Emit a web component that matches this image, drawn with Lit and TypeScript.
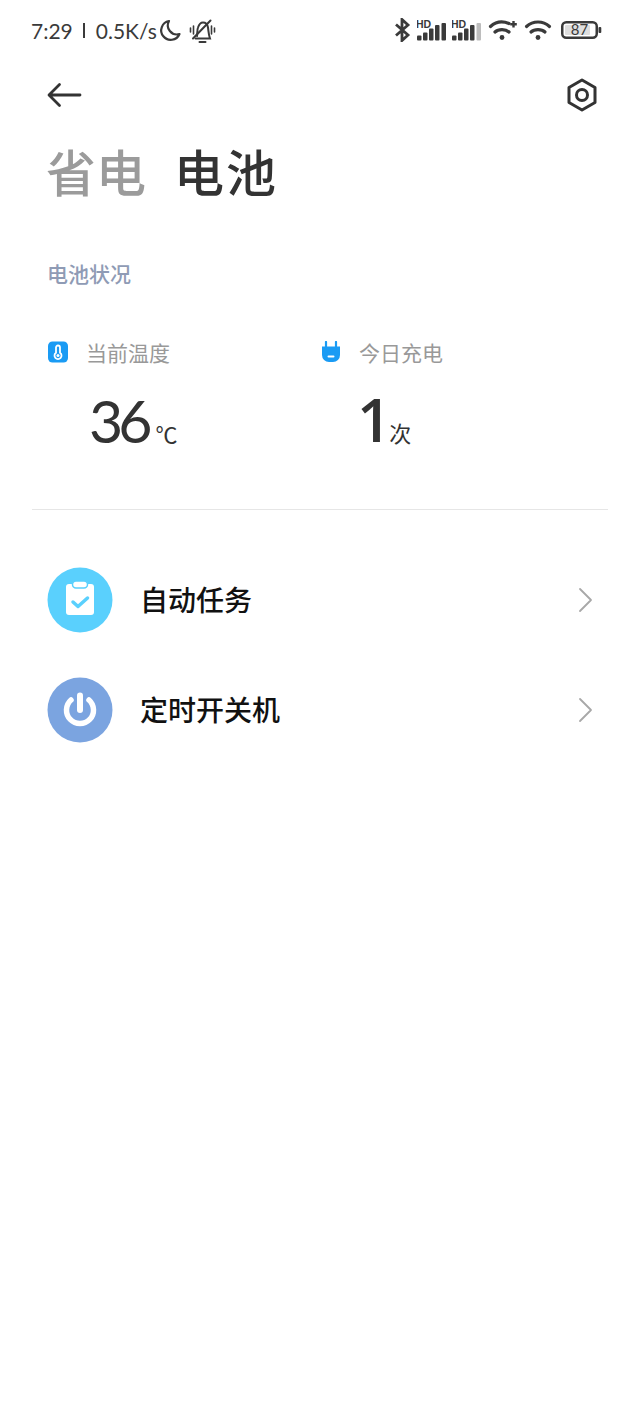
import { LitElement, html, css, svg } from "lit";
import { customElement } from "lit/decorators.js";

const signal = (last: string) => svg`
  <svg width="29" height="24" viewBox="0 0 29 24">
    <text x="-1" y="10" font-family="Liberation Sans" font-weight="700" font-size="10.500" fill="#3a3a3a">HD</text>
    <rect x="0" y="17.500" width="4.500" height="5" rx="1" fill="#3a3a3a" />
    <rect x="6" y="14.500" width="4.500" height="8" rx="1" fill="#3a3a3a" />
    <rect x="12" y="10.500" width="4.500" height="12" rx="1" fill="#3a3a3a" />
    <rect x="18" y="7" width="4.500" height="15.500" rx="1" fill="#3a3a3a" />
    <rect x="24.500" y="5" width="4.500" height="17.500" rx="1" fill="${last}" />
  </svg>`;

const wifi = (plus: boolean) => svg`
  <svg class=${plus ? "wifi-plus" : ""} width=${plus ? 30 : 28} height="22" viewBox="0 0 ${plus ? 30 : 28} 22" fill="none" stroke="#3a3a3a" stroke-width="3.200" stroke-linecap="round">
    <path d=${plus ? "M2.500 7.500C8 2.500 15 2 21 4.500" : "M2.500 7.500C9 1.500 19 1.500 25.500 7.500"} />
    <path d="M7 13C10.500 9.800 17.500 9.800 21 13" />
    <circle cx="14" cy="18.500" r="2.400" fill="#3a3a3a" stroke="none" />
    ${plus ? svg`<path d="M25.500 2V8.500M22.200 5.200H28.800" stroke-width="2.400" stroke-linecap="butt" />` : null}
  </svg>`;

const chevron = svg`
  <svg width="15" height="26" viewBox="0 0 15 26" fill="none" stroke="#a8a8a8" stroke-width="1.800" stroke-linecap="round" stroke-linejoin="round">
    <path d="M2 2L13 13L2 24" />
  </svg>`;

@customElement("app-root")
export class AppRoot extends LitElement {
  static styles = css`
    :host {
      display: block;
      min-height: 1422px;
      background: #fff;
      font-family: "Noto Sans CJK SC", sans-serif;
      color: #333;
    }
    .status {
      height: 60px;
      padding: 0 38px 0 31px;
      display: flex;
      align-items: center;
      justify-content: space-between;
      color: #3a3a3a;
      font-family: Lato, sans-serif;
      font-size: 21px;
      box-sizing: border-box;
    }
    .status-side {
      display: flex;
      align-items: center;
    }
    .status svg {
      display: block;
    }
    .sep {
      width: 2px;
      height: 15px;
      background: #3a3a3a;
      margin: 0 11px 0 10px;
    }
    .speed {
      margin-right: 1px;
    }
    .bell {
      margin-left: 7px;
    }
    .right {
      gap: 6px;
    }
    .wifi-plus {
      margin-left: 1px;
    }
    .battery {
      margin-left: 3px;
    }
    .bar {
      height: 70px;
      padding: 0 42px 0 47px;
      display: flex;
      align-items: center;
      justify-content: space-between;
    }
    .bar svg {
      display: block;
    }
    .tabs {
      margin-top: 5px;
      padding-left: 46px;
      display: flex;
      gap: 28px;
      font-size: 50px;
      line-height: 70px;
      font-weight: 500;
    }
    .tab-off {
      color: #9b9b9b;
    }
    .tab-on {
      letter-spacing: 2px;
    }
    .section {
      margin: 52px 0 0 47px;
      font-size: 21px;
      line-height: 32px;
      font-weight: 500;
      color: #8f9bb5;
    }
    .stats {
      margin-top: 47px;
      padding-left: 48px;
      display: grid;
      grid-template-columns: 273px 1fr;
    }
    .stat-head {
      display: flex;
      align-items: center;
      gap: 18px;
      height: 32px;
      font-size: 21px;
      color: #999;
    }
    .stat-head svg {
      display: block;
      flex: none;
    }
    .stat-value {
      margin: 17px 0 0 41px;
      display: flex;
      align-items: baseline;
      gap: 8px;
      font-family: Lato, sans-serif;
      font-size: 59px;
      letter-spacing: -5px;
      line-height: 72px;
      color: #333;
    }
    .stat-count {
      margin-left: 36px;
      gap: 0;
      font-family: "Open Sans", sans-serif;
      font-weight: 600;
      font-size: 60px;
      line-height: 68px;
      letter-spacing: -2px;
    }
    .stat-unit {
      font-size: 22px;
      font-weight: 400;
      letter-spacing: 0;
      font-family: "Noto Sans CJK SC", sans-serif;
    }
    .divider {
      margin: 40px 32px 0;
      height: 1px;
      background: #e6e6e6;
    }
    .list {
      margin-top: 35px;
    }
    .row {
      height: 110px;
      padding: 0 47px;
      display: flex;
      align-items: center;
      gap: 27px;
      font-size: 28px;
      font-weight: 500;
      color: #111;
    }
    .row svg {
      display: block;
      flex: none;
    }
    .row-label {
      flex: 1;
      padding-bottom: 2px;
    }
  `;

  render() {
    return html`
      <div class="status">
        <div class="status-side">
          <span>7:29</span>
          <span class="sep"></span>
          <span class="speed">0.5K/s</span>
          <svg width="24" height="24" viewBox="0 0 24 24" fill="none" stroke="#3a3a3a" stroke-width="2.200" stroke-linejoin="round">
            <path d="M11 3A9.500 9.500 0 1 0 21.500 16A9 9 0 0 1 11 3Z" />
          </svg>
          <svg class="bell" width="27" height="26" viewBox="0 0 27 26" fill="none" stroke="#3a3a3a" stroke-width="2" stroke-linecap="round">
            <path d="M8 19C8.500 16 8 13 9 10.500C10 7.500 11.500 5.500 14 5.500C16.500 5.500 18.500 7.500 19 10.500C19.500 14 19.500 17 21 21.500H6.500" />
            <path d="M10.500 25H16.500M4 21.500L21.500 3.500" />
            <path d="M1.500 11V15M4.500 9V17M22.500 9V17M25.500 11V15" stroke-width="1.600" />
          </svg>
        </div>
        <div class="status-side right">
          <svg width="17" height="24" viewBox="0 0 17 24" fill="none" stroke="#3a3a3a" stroke-width="2.800">
            <path d="M2 6.500L14 17L8 22.500V1.500L14 7L2 17.500" />
          </svg>
          ${signal("#3a3a3a")} ${signal("#bdbdbd")} ${wifi(true)} ${wifi(false)}
          <svg class="battery" width="41" height="20" viewBox="0 0 41 20">
            <rect x="1.250" y="2.250" width="34.500" height="15.500" rx="4" fill="none" stroke="#3a3a3a" stroke-width="2.500" />
            <rect x="4" y="5" width="25" height="10" rx="1" fill="#dedede" />
            <text x="18.500" y="15" text-anchor="middle" font-family="Lato" font-size="15" fill="#3a3a3a">87</text>
            <rect x="37.500" y="7" width="2.800" height="6" rx="1" fill="#3a3a3a" />
          </svg>
        </div>
      </div>

      <div class="bar">
        <svg width="36" height="26" viewBox="0 0 36 26" fill="none" stroke="#333" stroke-width="2.800" stroke-linecap="round" stroke-linejoin="round">
          <path d="M33 13H2.500M12.500 2.500L2 13L12.500 23.500" />
        </svg>
        <svg width="32" height="34" viewBox="0 0 32 34" fill="none" stroke="#333" stroke-width="3" stroke-linejoin="round">
          <path d="M16 2L29 9.500V24.500L16 32L3 24.500V9.500Z" />
          <circle cx="16" cy="17" r="5.500" />
        </svg>
      </div>

      <div class="tabs">
        <span class="tab-off">省电</span>
        <span class="tab-on">电池</span>
      </div>

      <div class="section">电池状况</div>

      <div class="stats">
        <div>
          <div class="stat-head">
            <svg width="20" height="22" viewBox="0 0 20 22">
              <rect width="20" height="21" y="0.500" rx="4.500" fill="#1a9bf4" />
              <path d="M10 4.500a2 2 0 0 1 2 2v5.200a3.500 3.500 0 1 1-4 0V6.500a2 2 0 0 1 2-2Z" fill="none" stroke="#fff" stroke-width="1.800" />
              <circle cx="10" cy="14.500" r="1.500" fill="#fff" />
            </svg>
            当前温度
          </div>
          <div class="stat-value">36<span class="stat-unit">℃</span></div>
        </div>
        <div>
          <div class="stat-head">
            <svg width="20" height="22" viewBox="0 0 20 22">
              <path d="M5 1V6M15 1V6" stroke="#1a9bf4" stroke-width="2.200" stroke-linecap="round" />
              <path d="M1 5.500H19V14A7 7 0 0 1 12 21H8A7 7 0 0 1 1 14Z" fill="#1a9bf4" />
              <rect x="6.500" y="14.500" width="7" height="2" rx="1" fill="#fff" />
            </svg>
            今日充电
          </div>
          <div class="stat-value stat-count">1<span class="stat-unit">次</span></div>
        </div>
      </div>

      <div class="divider"></div>

      <div class="list">
        <div class="row">
          <svg width="66" height="66" viewBox="0 0 66 66">
            <circle cx="33" cy="33" r="32.500" fill="#5ad0fd" />
            <path d="M19 20A3 3 0 0 1 22 17H44A3 3 0 0 1 47 20V45A3 3 0 0 1 44 48H22A3 3 0 0 1 19 45Z" fill="#fff" />
            <rect x="25.500" y="14" width="15" height="7" rx="3.500" fill="#fff" stroke="#5ad0fd" stroke-width="1.500" />
            <path d="M26 35L31 39.500L40.500 31" fill="none" stroke="#5ad0fd" stroke-width="3.500" stroke-linecap="round" stroke-linejoin="round" />
          </svg>
          <span class="row-label">自动任务</span>
          ${chevron}
        </div>
        <div class="row">
          <svg width="66" height="66" viewBox="0 0 66 66">
            <circle cx="33" cy="33" r="32.500" fill="#7ba4e0" />
            <path d="M24 23A13.500 13.500 0 1 0 42 23" fill="none" stroke="#fff" stroke-width="5.500" stroke-linecap="round" />
            <path d="M33 18.500V33" fill="none" stroke="#fff" stroke-width="6" stroke-linecap="round" />
          </svg>
          <span class="row-label">定时开关机</span>
          ${chevron}
        </div>
      </div>
    `;
  }
}
